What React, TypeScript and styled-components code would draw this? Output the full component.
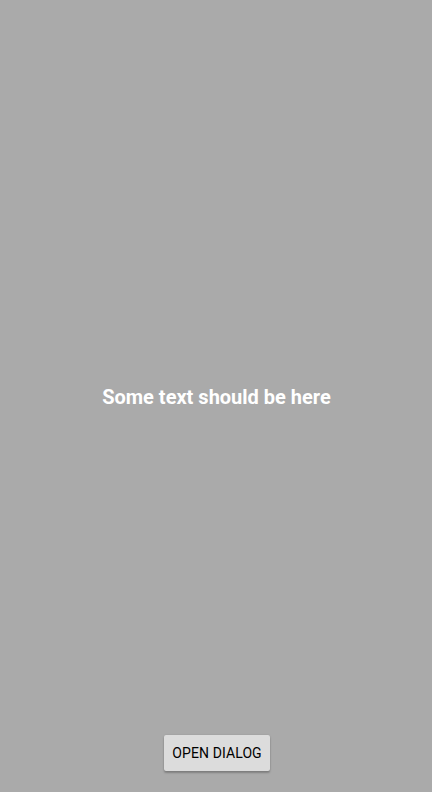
import React from "react";
import styled, { createGlobalStyle } from "styled-components";

const Global = createGlobalStyle`
  html, body { margin: 0; padding: 0; height: 100%; }
  body { background: #aaaaaa; font-family: Roboto, "Noto Sans", sans-serif; }
  #root { height: 100%; }
`;

const Screen = styled.div`
  display: grid;
  height: 792px;
  width: 100%;
  background: #aaaaaa;
  & > * { grid-area: 1 / 1; }
`;

const Message = styled.div`
  align-self: center;
  justify-self: center;
  margin: 2px 0 0 1px;
  color: #ffffff;
  font-size: 20px;
  font-weight: 700;
  line-height: 24px;
`;

const DialogButton = styled.button`
  align-self: end;
  justify-self: center;
  margin: 0 0 21px 2px;
  height: 36px;
  padding: 0 8px;
  min-width: 88px;
  border: none;
  border-radius: 2px;
  background: #dcdcdc;
  color: #000000;
  font-family: Roboto, sans-serif;
  font-size: 14px;
  font-weight: 400;
  letter-spacing: 0.1px;
  box-shadow: 0 2px 2px rgba(0, 0, 0, 0.24), 0 0 2px rgba(0, 0, 0, 0.12);
  cursor: pointer;
`;

export default function App() {
  return (
    <>
      <Global />
      <Screen>
        <Message>Some text should be here</Message>
        <DialogButton>OPEN DIALOG</DialogButton>
      </Screen>
    </>
  );
}
